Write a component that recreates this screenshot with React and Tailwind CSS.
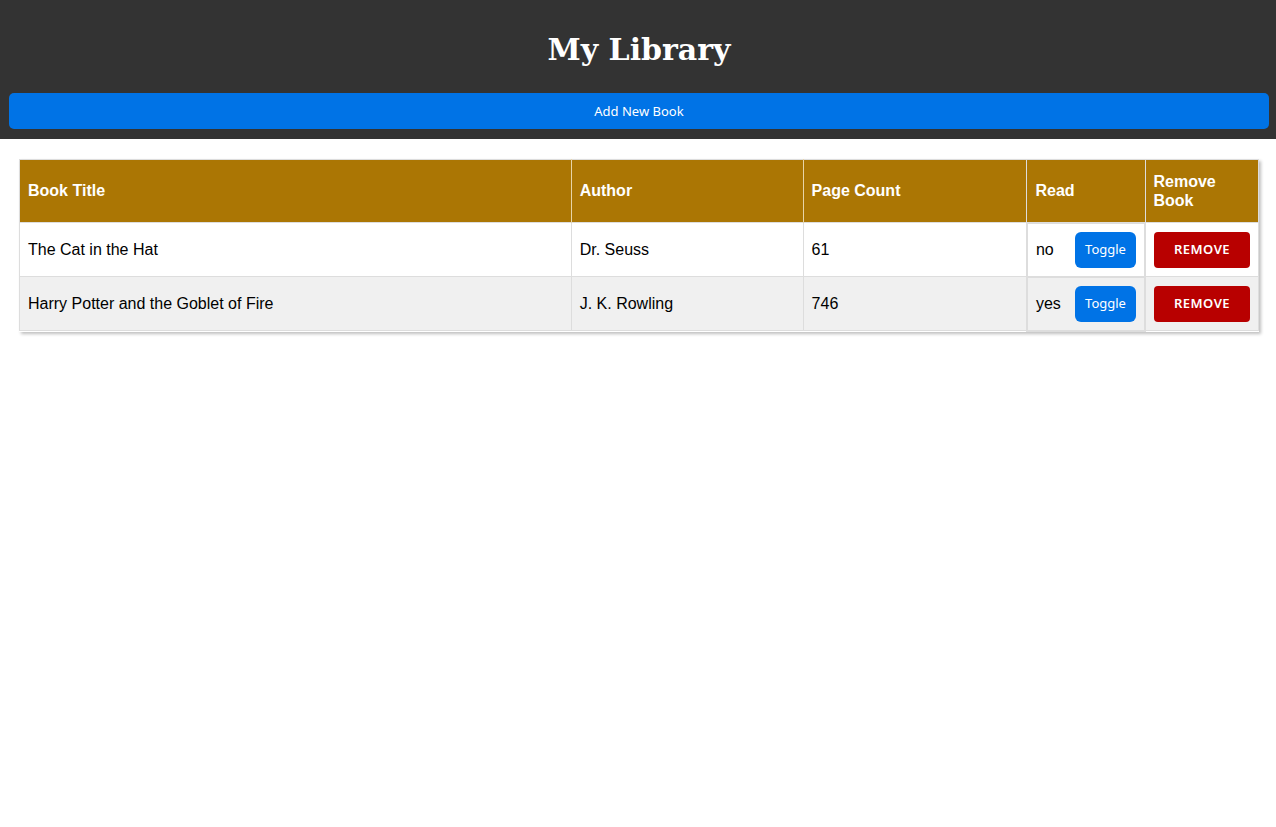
import React, { useState } from 'react'

const initialBooks = [
  { id: 1, title: 'The Cat in the Hat', author: 'Dr. Seuss', pages: 61, read: false },
  { id: 2, title: 'Harry Potter and the Goblet of Fire', author: 'J. K. Rowling', pages: 746, read: true },
]

const uiFont = { fontFamily: '"Noto Sans", "Open Sans", sans-serif' }

const App = () => {
  const [books, setBooks] = useState(initialBooks)

  const toggleRead = (id) => {
    setBooks(books.map((b) => (b.id === id ? { ...b, read: !b.read } : b)))
  }

  const removeBook = (id) => {
    setBooks(books.filter((b) => b.id !== id))
  }

  return (
    <div className="min-h-[827px] bg-white" style={{ fontFamily: '"Liberation Sans", Arial, sans-serif' }}>
      {/* Header */}
      <header className="bg-[#333333] pl-[9px] pr-[7px] pt-[28px] pb-[10px]">
        <h1
          className="text-center text-white text-[30px] font-bold leading-[44px] mb-[21px]"
          style={{ fontFamily: '"DejaVu Serif", "Liberation Serif", serif' }}
        >
          My Library
        </h1>
        <button
          className="w-full h-[36px] pt-[1px] rounded-[5px] bg-[#0073e6] text-white text-[13px]"
          style={uiFont}
        >
          Add New Book
        </button>
      </header>

      {/* Table */}
      <div className="pt-[20px] pl-[19px]">
        <table className="w-[1240px] border-collapse border border-[#dddddd] shadow-[2px_2px_3px_rgba(0,0,0,0.25)] text-[16px]">
          <thead>
            <tr className="bg-[#ab7604] text-white text-left h-[63px]">
              <th className="w-[552px] px-2 font-bold border-r border-[#e8d4a8]">Book Title</th>
              <th className="w-[232px] px-2 font-bold border-r border-[#e8d4a8]">Author</th>
              <th className="w-[224px] px-2 font-bold border-r border-[#dddddd]">Page Count</th>
              <th className="w-[118px] px-2 font-bold border-r border-[#dddddd]">Read</th>
              <th className="px-2 font-bold leading-[19px]">Remove Book</th>
            </tr>
          </thead>
          <tbody>
            {books.map((book, i) => (
              <tr key={book.id} className={`h-[54px] text-black ${i % 2 === 1 ? 'bg-[#f0f0f0]' : 'bg-white'}`}>
                <td className="px-2 border border-[#dddddd]">{book.title}</td>
                <td className="px-2 border border-[#dddddd]">{book.author}</td>
                <td className="px-2 border border-[#dddddd]">{book.pages}</td>
                <td className="px-2 border-2 border-[#dddddd]">
                  <div className="flex items-center justify-between">
                    <span>{book.read ? 'yes' : 'no'}</span>
                    <button
                      onClick={() => toggleRead(book.id)}
                      className="w-[61px] h-[36px] rounded-[6px] bg-[#0073e6] text-white text-[13px]"
                      style={uiFont}
                    >
                      Toggle
                    </button>
                  </div>
                </td>
                <td className="px-2 border border-[#dddddd]">
                  <button
                    onClick={() => removeBook(book.id)}
                    className="w-[96px] h-[36px] rounded-[4px] bg-[#b80000] text-white text-[13px] font-semibold tracking-[0.5px]"
                    style={uiFont}
                  >
                    REMOVE
                  </button>
                </td>
              </tr>
            ))}
          </tbody>
        </table>
      </div>
    </div>
  )
}

export default App
